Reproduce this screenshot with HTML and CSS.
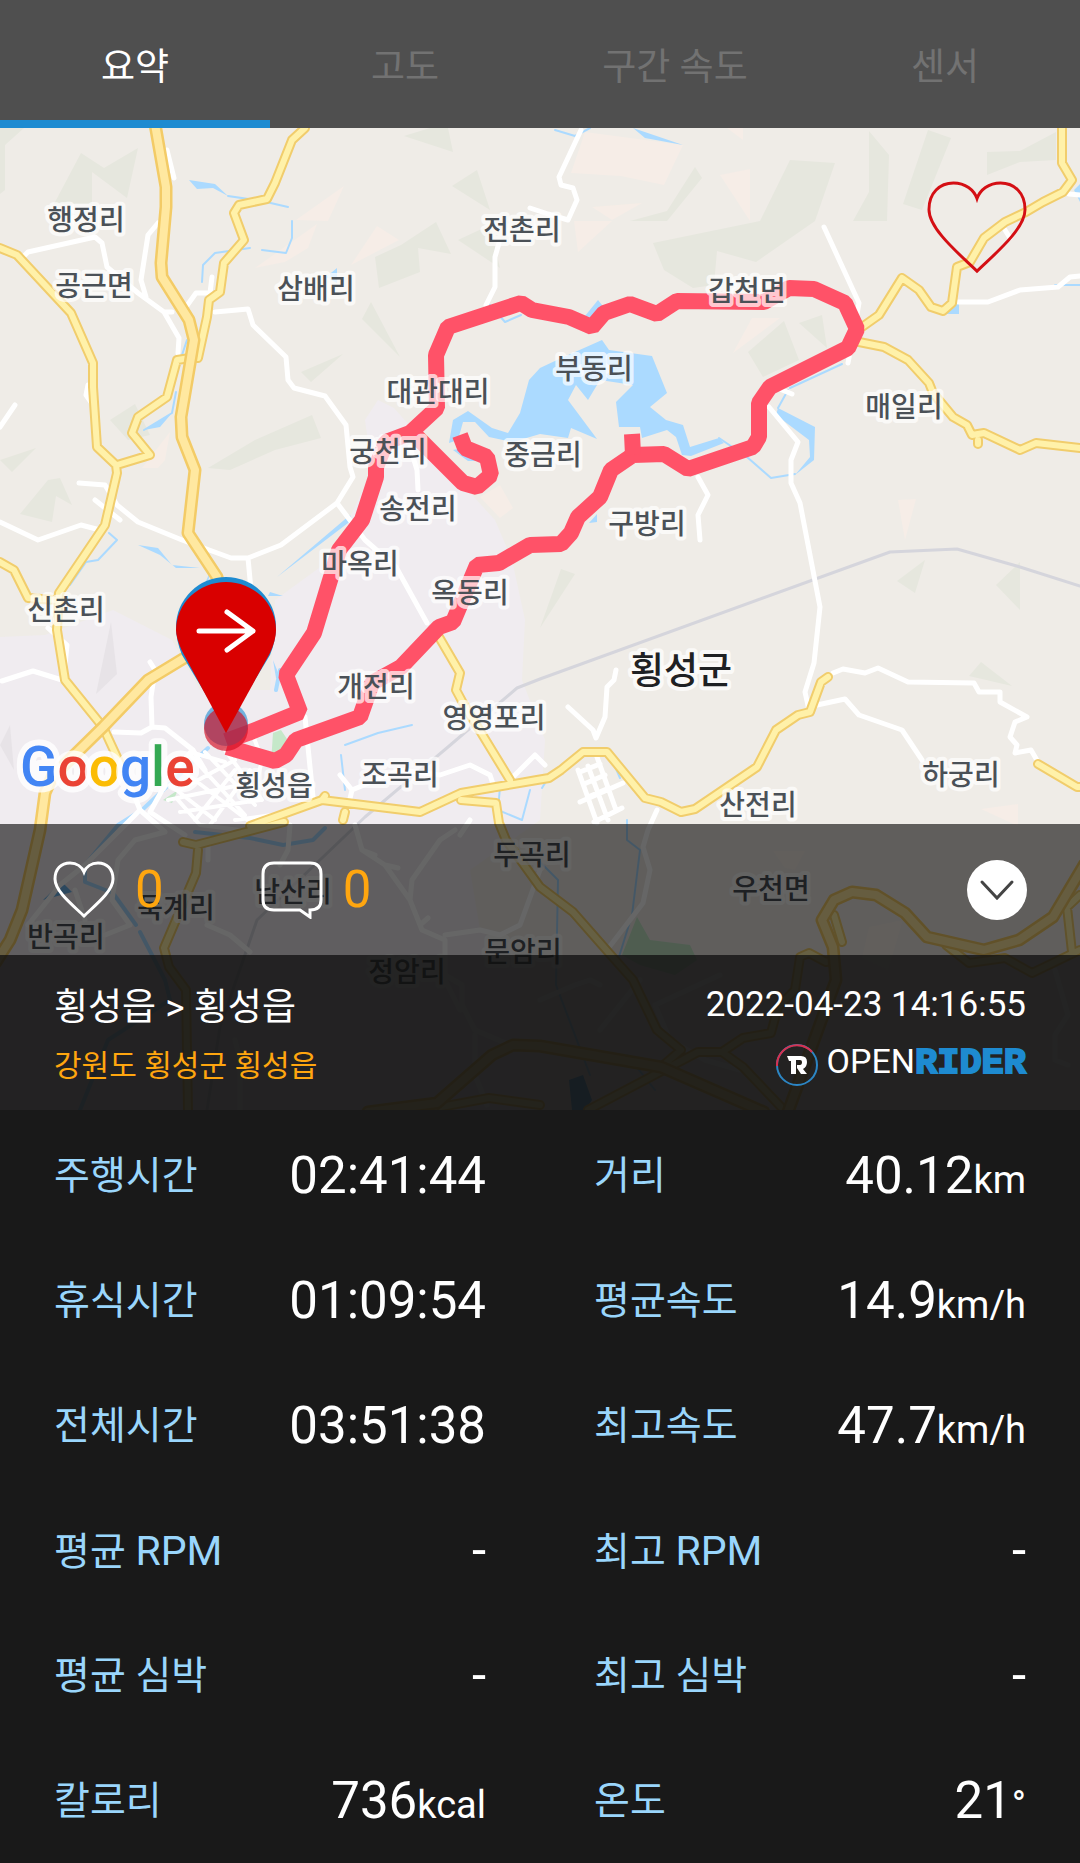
FILE: index.html
```html
<!DOCTYPE html>
<html lang="ko">
<head>
<meta charset="utf-8">
<meta name="viewport" content="width=device-width, initial-scale=1">
<title>주행 기록 요약</title>
<link rel="stylesheet" href="styles.css">
</head>
<body>
<div class="app">
  <nav class="tabs">
    <button class="tab tab-active" type="button">요약</button>
    <button class="tab" type="button">고도</button>
    <button class="tab" type="button">구간 속도</button>
    <button class="tab" type="button">센서</button>
  </nav>

  <section class="ride">
    <svg class="map" viewBox="0 128 1080 982" preserveAspectRatio="xMidYMin slice" role="img" aria-label="주행 경로 지도">
      <defs>
        <path id="local-roads" d="M305 128L292 140L275 183L267 199L239 205L234 213L244 240L224 263L220 292L209 300L207 317L198 358M190 358L177 360L167 397L138 417L132 433L150 455L117 465M0 248L17 255L71 313L93 363V387L97 447L116 465L117 473L105 525L59 593L57 630L65 680L103 727L122 768M0 562L14 570L28 598L55 600M439 637L460 673L456 690L463 703L510 780M250 826L322 800L420 812L461 793L537 780L549 778L561 770L583 752H607L645 798L661 802L681 812L695 809L757 767L776 730L798 715L810 712L821 682L828 677M322 800L325 796M345 812L343 820M461 800L496 803L499 823L506 840L540 887L573 912L609 953L633 980L657 1030L681 1050M1062 128V163L1072 180L1063 192L1043 202L1026 212L1005 222L984 238L970 262L957 267L952 303L943 311L931 307L919 290L902 278L879 315L862 327M859 342L884 347L908 360L929 383L933 393L953 417L967 425L972 435L984 433L1020 450L1036 443L1080 448M1038 764L1077 787H1084M978 440V444M284 822L196 845L183 842M198 850L196 873L164 948L169 967L186 990L188 1110M743 1067L722 1052H698L588 1110M722 1052L743 1038L771 1033L778 1007L795 990L800 957L809 953L826 962L835 960M946 945L969 963L1005 958L1032 973L1080 950M1072 952L1067 907L1080 895M441 1107L489 1098L540 1105M743 1067L781 1107M681 1050L660 1068M834 915L842 942"/>
        <path id="highways" d="M155 124L166 187V207L161 263L162 277L189 320L194 340L181 417L182 437L195 470L188 533L217 577L225 610L186 657L148 680L103 727L52 777L45 793L40 830L22 910L10 940L-4 962M368 1112L437 1103L492 1055L513 1045L540 1046L661 1067L764 1112M788 1112L836 980L833 947L822 920L834 900L852 892L876 895L905 913L927 937L984 950L1019 940L1053 917L1084 865"/>
      </defs>
      <rect class="land" y="128" width="1080" height="982"/>
      <path class="urban" d="M0 637L45 635L113 610L172 640L200 690L270 690L275 600L330 560L372 470L365 420L378 400L394 408L440 460L495 520L512 560L525 620L522 680L545 740L540 820L470 870L480 930L520 960V1110H0Z"/>
      <g class="wood">
        <path d="M0 128H24L5 145V190L0 194ZM54 204L81 153L104 168L138 148L127 198L92 172V204ZM404 136L430 128H448L453 152ZM452 186L477 170L490 210ZM458 240L490 225L500 268ZM375 257L401 245L436 222L451 254L418 248L420 272L379 288ZM362 319L371 302L400 357ZM301 372L343 354L311 382ZM110 420L135 404L150 435L128 440ZM208 468L255 440L312 415L321 438L275 450L230 470ZM0 460L36 448L12 472ZM20 514L48 480L60 478L72 505L56 496L52 522Z"/>
        <path d="M630 221L667 211L695 167L702 178L667 221ZM653 243L760 221L790 160L835 163L815 221L756 262L717 251L714 285L693 288L664 270ZM869 131L889 155L887 221H853L869 192ZM928 130L951 138L922 210L903 204ZM987 152L1020 151L1056 132V160L1020 162L987 175ZM748 352L784 321L799 360L763 377ZM799 323L822 315L827 348ZM540 628L561 569L575 574ZM897 581L925 560L915 593ZM996 585L1020 562V610ZM969 676L981 662L1012 686Z"/>
        <path class="dusk" d="M96 694L111 622L117 674ZM0 745L10 725L14 770Z"/>
      </g>
      <g class="sand">
        <path d="M296 220L344 186L328 221ZM255 268L317 224L308 248L285 262ZM351 265L377 226L399 240ZM142 468L170 432L165 460L158 468ZM571 173L585 132L683 145L664 185L621 176ZM720 175L750 169V221ZM592 207L642 203L612 220ZM574 221H612L578 252ZM733 353L752 318H780ZM898 500L916 499L905 540ZM480 497L500 485L513 508L500 518ZM773 851H805L795 870L785 868ZM869 927L903 920L888 970L862 958ZM981 809L1018 804V826ZM727 128H743V140Z"/>
      </g>
      <g class="water">
        <path d="M449 443L453 420L468 411L492 428L508 433L520 413L529 380L540 368L557 360L602 340L609 350L652 356L667 393L650 407L666 420L683 425L690 447L719 438L724 443L691 456L682 455L676 437L667 430L642 438L640 427H619L616 402L633 385L600 380L588 400L576 385L568 400L597 439L571 428L568 438L540 434L513 442L489 437L475 422H463L458 440Z"/>
        <path d="M453 450L468 461H478L462 448ZM778 408L815 427L814 460L795 475L810 457L809 440L776 415ZM189 180L215 184L228 196L213 188L197 189ZM585 316L598 300L606 310L595 318ZM633 128L683 145L645 138ZM144 430L172 413L160 427ZM200 623L203 588L210 572ZM938 314H959V300ZM326 277L337 268V283ZM138 545L158 548L172 565L200 568L176 568L160 555ZM277 577L350 515L352 520ZM273 660L281 680L276 678ZM270 592L283 596H268ZM589 523L597 514V522ZM1074 190L1080 184V202Z"/>
        <path class="pond" d="M569 1080L583 1075L592 1100L585 1110H572Z"/>
        <path class="pond" d="M43 900L62 882L72 892Z"/>
      </g>
      <g class="stream">
        <path d="M719 438L747 457L771 478L795 474M788 390L778 408M790 388L842 364M228 196L262 201L288 207M292 221V238L286 253L262 250M250 248L215 253L203 265L202 282M187 340L181 358M176 392L172 413L144 430M109 533L117 540L98 560L86 562L70 585M490 305L505 322L521 315M555 130L575 136L590 128M345 745L378 733L412 725M341 755L345 790M1080 285L1055 285M500 787L498 810L522 820L530 790M627 820V840L640 850L632 915L618 960M540 862L558 880L556 985L590 1075M627 1055L655 1090M542 788L550 775L560 775M610 755L620 778"/>
        <path class="river" d="M280 670L276 690M208 748L142 810L118 825L85 865V882L113 893L136 925M140 932L165 980L170 1000L108 1040L80 1110M195 832L250 838L283 845L313 840L325 828"/>
      </g>
      <g class="park">
        <path d="M273 733L281 730L289 742L281 760L271 763ZM163 800L178 790L172 803ZM622 955L637 917L650 940L690 945L697 960L675 975L640 965Z"/>
      </g>
      <path class="rail" d="M1080 586L1020 567L957 549L890 552L540 679L517 688L448 747L365 817L257 920L220 1027L207 1110"/>
      <g class="lane">
        <path d="M24 256L28 252L95 237L102 243L107 267L138 293L164 312H172M158 223L148 235L141 280L146 297M167 150L174 178M164 312L179 338L178 353M186 307L196 293H210L212 277M0 427L15 405M88 385L86 395L93 405M215 312L248 309L253 325L286 357L288 380L294 388L325 396L346 425L350 467L353 477L337 503L281 545L248 558H231L182 540L138 522L117 505L105 485L79 483M95 500L120 520M337 503L365 540L396 567L427 623M248 558L251 590M0 522L38 540L81 525L100 530M2 681L33 671L62 680M48 628L67 645L65 665M150 662L155 670L151 697L152 727L141 733L114 732M152 727L165 728L193 750L205 770M305 717L313 797M410 447L417 470L418 490"/>
        <path d="M581 130L559 177L561 185L573 188L577 200L568 220L548 214L530 208M499 243L495 257V287L486 305M824 227L859 303L848 363M770 385L792 394M769 407L798 442L791 460V483L800 503L820 607L814 663L805 692L809 710M958 302H988L1020 290L1058 287L1070 277L1080 276M1069 194L1080 195M1005 230L1010 238M698 477L708 495L698 515L700 540M833 673L843 669L865 673L878 668L908 682L974 683L979 692H1000V702L1027 717L1015 722L1010 737L1017 745L1015 753L1031 750L1038 762M817 705L845 699L859 715L902 730L922 760M568 707L593 730L596 738L605 717L607 687L614 680L616 670M657 810L648 830L643 847L650 870L643 903L607 950"/>
        <path d="M578 770L597 823M588 766L608 820M597 757L616 810M580 772L600 764M584 784L605 775M588 797L609 788M580 802L623 783M594 822L622 808M345 820L352 790L400 770L440 775L470 765L490 775L495 790M352 790L340 775M510 780L535 755L545 765M470 820L460 835"/>
        <path d="M120 760L140 810L165 832L135 840L118 860L112 900L130 925L105 935M140 810L85 865L60 885L28 925M165 785L150 812L185 835M290 825L288 850L280 865M355 825L362 850L385 865L410 900L422 930L445 940V975L462 985V1005L475 1030L510 1045M362 850L375 855M385 865L398 868M410 900L412 880L440 840L455 830M445 935L480 930L500 935L520 925L540 870M420 925L428 918M207 925L230 935L250 952M445 980L460 1010M475 1035V1075L487 1105M240 1110V1060L235 1040M75 890L85 920M540 1000L575 985L590 980L600 985M600 1030L640 980M655 1005L720 975M655 1005L670 1040L705 1060L740 1070M1055 970L1068 1015L1055 1035V1060L1068 1065M208 860V845"/>
        <path class="blocks" d="M172 775L190 752L225 762M180 790L235 760M168 800L240 785M180 812L260 800M175 765L250 822M190 755L245 815M205 752L255 805M225 750L262 800M170 785L215 820M195 820L235 770M210 825L250 770M178 800L200 825L240 830M255 790L262 760L253 735M235 820L272 815"/>
      </g>
      <use class="road-edge" href="#local-roads"/>
      <use class="road-fill" href="#local-roads"/>
      <use class="highway-edge" href="#highways"/>
      <use class="highway-fill" href="#highways"/>
      <g class="route">
        <path d="M226 741L248 733L300 712L286 675L314 633L331 577L339 550L362 520L376 477V467L386 442L410 433L437 408L436 355L448 327L521 303L532 310L569 317L592 327L604 313L630 304L657 314L677 301L764 302L789 288L814 289L845 303L857 329L848 348L770 387L759 403V437L753 447L688 469L664 454L633 455L611 470L600 497L578 517L571 533L561 544L530 545L499 563L477 565L453 622L439 627L401 667L372 683L360 717L296 740L286 755L275 761L227 747"/>
        <path d="M413 433L463 483L477 487L491 475L487 457L465 448L460 435M633 455L632 434"/>
      </g>
      <g class="place">
        <text x="86" y="230">행정리</text><text x="94" y="296">공근면</text>
        <text x="316" y="299">삼배리</text><text x="522" y="240">전촌리</text>
        <text x="438" y="402">대관대리</text><text x="388" y="462">궁천리</text>
        <text x="543" y="465">중금리</text><text x="747" y="301">갑천면</text>
        <text x="594" y="379">부동리</text><text x="904" y="417">매일리</text>
        <text x="418" y="519">송전리</text><text x="360" y="574">마옥리</text>
        <text x="66" y="620">신촌리</text><text x="470" y="603">옥동리</text>
        <text x="376" y="697">개전리</text><text x="494" y="728">영영포리</text>
        <text x="274" y="796">횡성읍</text><text x="400" y="785">조곡리</text>
        <text x="647" y="534">구방리</text><text class="county" x="681" y="684">횡성군</text>
        <text x="758" y="815">산전리</text><text x="961" y="785">하궁리</text>
        <text x="532" y="865">두곡리</text><text x="771" y="899">우천면</text>
        <text x="293" y="902">남산리</text><text x="176" y="918">묵계리</text>
        <text x="66" y="947">반곡리</text><text x="407" y="982">정암리</text>
        <text x="523" y="962">문암리</text>
      </g>
      <g class="pin">
        <circle class="pin-start-dot" cx="226" cy="724" r="22"/>
        <circle class="pin-end-dot" cx="226" cy="729" r="22"/>
        <path class="pin-start" d="M226 728L182 655Q176 640 176 627A50 50 0 0 1 276 627Q276 640 270 655Z"/>
        <path class="pin-end" d="M226 733L182 651Q176 638 176 630A50 48 0 0 1 276 630Q276 640 270 653Z"/>
        <path class="pin-arrow" d="M199 631H253M227 612L253 631L227 650"/>
      </g>
      <text class="google" x="20" y="786"><tspan class="g-blue">G</tspan><tspan class="g-red">o</tspan><tspan class="g-yellow">o</tspan><tspan class="g-blue">g</tspan><tspan class="g-green">l</tspan><tspan class="g-red">e</tspan></text>
    </svg>

    <div class="viewport">
      <button class="favorite" type="button" aria-label="즐겨찾기">
        <svg viewBox="0 0 102 96"><path d="M51 93C36 78 2 51 2 30C2 13 13 3 27 3C39 3 48 10 51 19C54 10 63 3 75 3C89 3 100 13 100 30C100 51 66 78 51 93Z"/></svg>
      </button>
    </div>

    <div class="social">
      <button class="social-item" type="button" aria-label="좋아요 0">
        <svg viewBox="0 0 62 58"><path d="M31 55C22 46 2 31 2 18C2 8 8 2 17 2C24 2 29 6 31 11C33 6 38 2 45 2C54 2 60 8 60 18C60 31 40 46 31 55Z"/></svg>
        <span>0</span>
      </button>
      <button class="social-item" type="button" aria-label="댓글 0">
        <svg viewBox="0 0 62 58"><path d="M13 2H49Q60 2 60 13V39Q60 49 49 49V56L39 49H13Q2 49 2 39V13Q2 2 13 2Z"/></svg>
        <span>0</span>
      </button>
      <button class="collapse" type="button" aria-label="접기">
        <svg viewBox="0 0 60 60"><path d="M15 22L30 38L45 22"/></svg>
      </button>
    </div>

    <header class="info">
      <div class="info-text">
        <h1>횡성읍 &gt; 횡성읍</h1>
        <p class="region">강원도 횡성군 횡성읍</p>
      </div>
      <div class="info-meta">
        <time datetime="2022-04-23T14:16:55">2022-04-23 14:16:55</time>
        <div class="brand">
          <svg class="brand-mark" viewBox="0 0 44 44">
            <circle class="ring-blue" cx="22" cy="22" r="20"/>
            <path class="ring-red" d="M2 23A20 20 0 0 1 37 9"/>
            <path class="brand-r" d="M12 13H26Q32 13 32 19Q32 24 28 26L32 31H26L22 25V22H25Q27 22 27 19Q27 17 25 17H21V31H16V18H14Z"/>
          </svg>
          <span class="wordmark"><span class="brand-open">OPEN</span><span class="brand-rider">RIDER</span></span>
        </div>
      </div>
    </header>
  </section>

  <dl class="stats">
    <div class="stat"><dt>주행시간</dt><dd>02:41:44</dd></div>
    <div class="stat"><dt>거리</dt><dd>40.12<span class="unit">km</span></dd></div>
    <div class="stat"><dt>휴식시간</dt><dd>01:09:54</dd></div>
    <div class="stat"><dt>평균속도</dt><dd>14.9<span class="unit">km/h</span></dd></div>
    <div class="stat"><dt>전체시간</dt><dd>03:51:38</dd></div>
    <div class="stat"><dt>최고속도</dt><dd>47.7<span class="unit">km/h</span></dd></div>
    <div class="stat"><dt>평균 <span class="latin">RPM</span></dt><dd>-</dd></div>
    <div class="stat"><dt>최고 <span class="latin">RPM</span></dt><dd>-</dd></div>
    <div class="stat"><dt>평균 심박</dt><dd>-</dd></div>
    <div class="stat"><dt>최고 심박</dt><dd>-</dd></div>
    <div class="stat"><dt>칼로리</dt><dd>736<span class="unit">kcal</span></dd></div>
    <div class="stat"><dt>온도</dt><dd>21<span class="unit">°</span></dd></div>
  </dl>
</div>
</body>
</html>
```
FILE: styles.css
```css
* { box-sizing: border-box; }

body {
  margin: 0;
  background: #191919;
  color: #fff;
  font-family: Roboto, "Noto Sans CJK KR", sans-serif;
}

button {
  margin: 0;
  padding: 0;
  border: 0;
  background: none;
  color: inherit;
  font: inherit;
}

.app {
  display: flex;
  flex-direction: column;
  min-height: 100vh;
}

/* Tabs */
.tabs {
  display: grid;
  grid-template-columns: repeat(4, 1fr);
  background: #4f4f4f;
}

.tab {
  height: 128px;
  border-top: 8px solid transparent;
  border-bottom: 8px solid transparent;
  color: #727272;
  font-size: 37px;
}

.tab-active {
  border-bottom-color: #1e8bd1;
  color: #fff;
}

/* Map with its overlays */
.ride {
  position: relative;
  overflow: hidden;
}

.map {
  position: absolute;
  inset: 0;
  width: 100%;
  height: 100%;
  stroke-linejoin: round;
  stroke-linecap: round;
}

.land { fill: #efece7; }
.urban { fill: #f0ecf0; }
.wood { fill: #e6e7de; }
.dusk { fill: #e7e3e7; }
.sand { fill: #f6ede7; }
.water { fill: #abdaff; }
.pond { fill: #6fb4ea; }
.park { fill: #c5e8c9; }
.stream { fill: none; stroke: #abdaff; stroke-width: 2; }
.river { stroke-width: 4; }
.rail { fill: none; stroke: #d5d5dc; stroke-width: 3; }
.lane { fill: none; stroke: #fff; stroke-width: 5; }
.blocks { stroke-width: 4; }
.road-edge { fill: none; stroke: #f1cd6c; stroke-width: 10; }
.road-fill { fill: none; stroke: #fff1a9; stroke-width: 6; }
.highway-edge { fill: none; stroke: #f3cb66; stroke-width: 13; }
.highway-fill { fill: none; stroke: #ffe8a0; stroke-width: 8; }

.route {
  fill: none;
  stroke: #ff5268;
  stroke-width: 16;
  stroke-linejoin: bevel;
  stroke-linecap: butt;
}

.place text {
  fill: #4b5157;
  stroke: rgba(255, 255, 255, .7);
  stroke-width: 8px;
  paint-order: stroke;
  font-family: "Noto Sans CJK KR", sans-serif;
  font-size: 28px;
  font-weight: 500;
  text-anchor: middle;
}

.place .county { fill: #1f2123; font-size: 37px; }

.pin-start { fill: #1e8bd1; }
.pin-end { fill: #d90000; }
.pin-start-dot { fill: rgba(30, 139, 209, .6); }
.pin-end-dot { fill: rgba(210, 10, 30, .65); }
.pin-arrow { fill: none; stroke: #fff; stroke-width: 5; }

.google {
  stroke: rgba(255, 255, 255, .8);
  stroke-width: 12px;
  paint-order: stroke;
  font-family: Roboto, sans-serif;
  font-size: 55px;
  font-weight: 500;
}

.g-blue { fill: #4285f4; }
.g-red { fill: #ea4335; }
.g-yellow { fill: #fbbc05; }
.g-green { fill: #34a853; }

.viewport {
  position: relative;
  display: flex;
  justify-content: flex-end;
  align-items: flex-start;
  height: 696px;
  padding: 52px 53px 0;
}

.favorite svg {
  display: block;
  width: 100px;
  fill: none;
  stroke: #d40f14;
  stroke-width: 3;
}

.social {
  position: relative;
  display: flex;
  align-items: center;
  gap: 97px;
  height: 131px;
  padding: 0 53px;
  background: rgba(0, 0, 0, .6);
}

.social-item {
  display: flex;
  align-items: center;
  gap: 20px;
  color: #ffa60f;
  font-size: 51px;
  line-height: 60px;
}

.social-item svg {
  width: 62px;
  fill: none;
  stroke: #fff;
  stroke-width: 3;
}

.collapse {
  width: 60px;
  height: 60px;
  margin-left: auto;
  border-radius: 50%;
  background: #fff;
}

.collapse svg {
  display: block;
  fill: none;
  stroke: #444;
  stroke-width: 3;
  stroke-linecap: round;
}

.info {
  position: relative;
  display: flex;
  justify-content: space-between;
  min-height: 155px;
  padding: 24px 54px 20px;
  background: rgba(12, 12, 12, .9);
}

.info-text { padding-top: 3px; }

.info h1 {
  margin: 0;
  font-size: 37px;
  font-weight: 400;
  line-height: 52px;
}

.region {
  margin: 8px 0 0;
  color: #ffa60f;
  font-size: 30px;
  line-height: 48px;
}

.info-meta {
  display: flex;
  flex-direction: column;
  align-items: flex-end;
  gap: 8px;
}

.info-meta time {
  font-size: 35px;
  line-height: 52px;
}

.brand {
  display: flex;
  align-items: center;
  line-height: 44px;
}

.brand-mark { width: 44px; margin-right: 8px; fill: none; stroke-width: 2; }
.ring-blue { stroke: #2c86c4; }
.ring-red { stroke: #d9304f; }
.brand-r { fill: #fff; }
.brand-open { font-size: 34px; }

.brand-rider {
  color: #1e8bd1;
  font-family: "Liberation Mono", monospace;
  font-size: 37px;
  font-weight: 700;
  line-height: 1;
  -webkit-text-stroke: 2px #1e8bd1;
}

/* Ride figures */
.stats {
  display: grid;
  flex: 1;
  grid-template-columns: 1fr 1fr;
  grid-auto-rows: 1fr;
  margin: 0;
  padding-top: 2px;
  background: #191919;
}

.stat {
  display: flex;
  align-items: center;
  justify-content: space-between;
  min-height: 120px;
  padding: 2px 54px 0;
}

.stat dt {
  color: #9ad6fc;
  font-size: 39px;
  line-height: 60px;
}

.latin { font-size: 41px; }

.stat dd {
  margin: 0;
  font-size: 51px;
  line-height: 60px;
}

.unit { font-size: 38px; line-height: 1; }
```
